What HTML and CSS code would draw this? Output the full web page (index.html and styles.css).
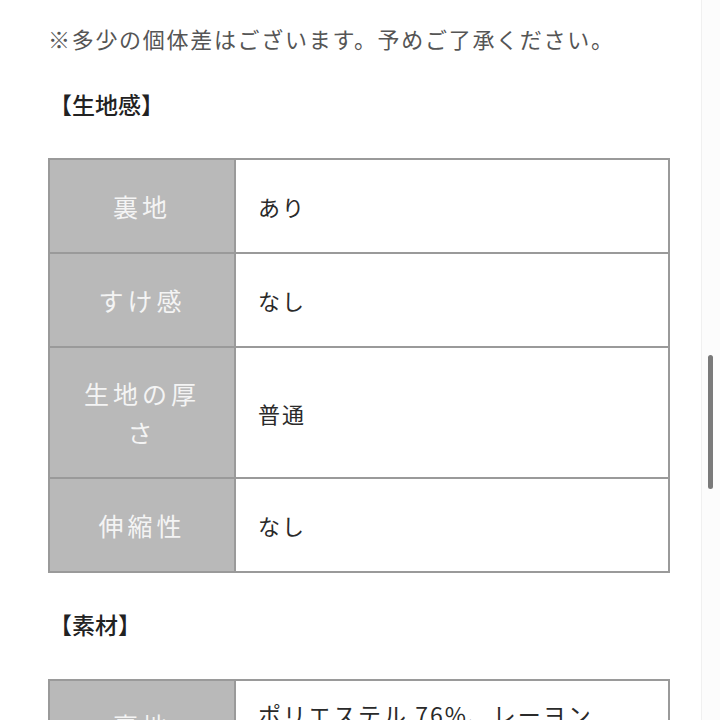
FILE: index.html
```html
<!DOCTYPE html>
<html lang="ja">
<head>
<meta charset="utf-8">
<link rel="stylesheet" href="styles.css">
</head>
<body>
<div class="page">
  <div class="content">
    <p class="note">※多少の個体差はございます。予めご了承ください。</p>
    <h2 class="heading">【生地感】</h2>
    <table class="spec">
      <tr><th>裏地</th><td>あり</td></tr>
      <tr><th>すけ感</th><td>なし</td></tr>
      <tr><th>生地の厚さ</th><td>普通</td></tr>
      <tr><th>伸縮性</th><td>なし</td></tr>
    </table>
    <h2 class="heading heading2">【素材】</h2>
    <table class="spec spec2">
      <tr><th>裏地</th><td>ポリエステル 76%、レーヨン<br>24%</td></tr>
    </table>
  </div>
  <div class="scrollbar"><div class="thumb"></div></div>
</div>
</body>
</html>
```
FILE: styles.css
```css
html, body {
  margin: 0;
  padding: 0;
  background: #ffffff;
}
.page {
  width: 720px;
  height: 720px;
  overflow: hidden;
  position: relative;
  font-family: "Noto Sans CJK JP", "Noto Sans", sans-serif;
}
.content {
  padding: 22px 0 0 48px;
  width: 622px;
}
.note {
  margin: 0;
  font-size: 22px;
  line-height: 32px;
  letter-spacing: 1.7px;
  color: #555555;
}
.heading {
  margin: 34px 0 0 1px;
  font-size: 23px;
  line-height: 32px;
  font-weight: 500;
  color: #222222;
  letter-spacing: 0;
}
.heading2 {
  margin-top: 35px;
}
.spec {
  border-collapse: collapse;
  width: 622px;
  margin-top: 38px;
  table-layout: fixed;
}
.spec2 {
  margin-top: 39px;
}
.spec th, .spec td {
  border: 2px solid #9a9a9a;
  padding: 26px 0;
  line-height: 40px;
}
.spec th {
  width: 128px;
  padding-left: 28px;
  padding-right: 28px;
  background: #b9b9b9;
  color: #f4f4f4;
  font-weight: 400;
  font-size: 25px;
  line-height: 38.5px;
  letter-spacing: 4px;
  text-align: center;
}
.spec td {
  padding-left: 22px;
  background: #ffffff;
  color: #2a2a2a;
  font-size: 22px;
  letter-spacing: 2px;
  text-align: left;
}
.spec2 th {
  vertical-align: top;
  padding-top: 25px;
}
.spec2 td {
  vertical-align: top;
  padding-top: 13px;
  font-size: 23px;
  letter-spacing: 2px;
}
.scrollbar {
  position: absolute;
  top: 0;
  right: 0;
  width: 18px;
  height: 720px;
  background: #fcfcfc;
  border-left: 1px solid #f0f0f0;
}
.thumb {
  position: absolute;
  top: 355px;
  left: 6px;
  width: 5px;
  height: 134px;
  border-radius: 3px;
  background: #7a7a7a;
}
```
